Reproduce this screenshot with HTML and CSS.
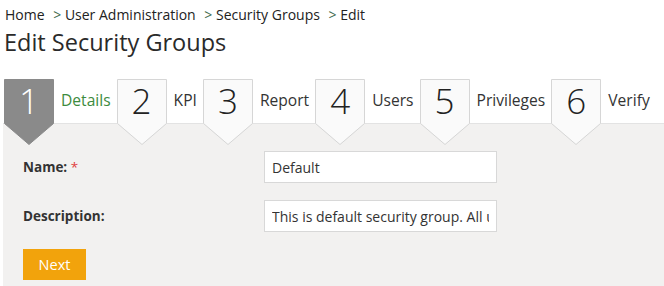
FILE: index.html
```html
<!DOCTYPE html>
<html lang="en">
<head>
    <meta charset="UTF-8">
    <meta name="viewport" content="width=device-width, initial-scale=1.0">
    <title>Edit Security Groups</title>
    <link rel="stylesheet" href="styles.css">
</head>
<body>
    <nav class="breadcrumb" aria-label="Breadcrumb">
        <a href="#">Home</a>
        <span class="sep">&gt;</span> <a href="#">User Administration</a>
        <span class="sep">&gt;</span> <a href="#">Security Groups</a>
        <span class="sep">&gt;</span> <span>Edit</span>
    </nav>
    <h1 class="page-title">Edit Security Groups</h1>

    <div class="wizard">
        <ol class="steps">
            <li class="step active">
                <span class="badge">
                    <svg width="50" height="66" viewBox="0 0 50 66"><polygon points="0.5,0.5 49.5,0.5 49.5,44.5 25,65.5 0.5,44.5"/></svg>
                    <span class="num">1</span>
                </span>
                <span class="label">Details</span>
            </li>
            <li class="step">
                <span class="badge">
                    <svg width="50" height="66" viewBox="0 0 50 66"><polygon points="0.5,0.5 49.5,0.5 49.5,44.5 25,65.5 0.5,44.5"/></svg>
                    <span class="num">2</span>
                </span>
                <span class="label">KPI</span>
            </li>
            <li class="step">
                <span class="badge">
                    <svg width="50" height="66" viewBox="0 0 50 66"><polygon points="0.5,0.5 49.5,0.5 49.5,44.5 25,65.5 0.5,44.5"/></svg>
                    <span class="num">3</span>
                </span>
                <span class="label">Report</span>
            </li>
            <li class="step">
                <span class="badge">
                    <svg width="50" height="66" viewBox="0 0 50 66"><polygon points="0.5,0.5 49.5,0.5 49.5,44.5 25,65.5 0.5,44.5"/></svg>
                    <span class="num">4</span>
                </span>
                <span class="label">Users</span>
            </li>
            <li class="step">
                <span class="badge">
                    <svg width="50" height="66" viewBox="0 0 50 66"><polygon points="0.5,0.5 49.5,0.5 49.5,44.5 25,65.5 0.5,44.5"/></svg>
                    <span class="num">5</span>
                </span>
                <span class="label">Privileges</span>
            </li>
            <li class="step">
                <span class="badge">
                    <svg width="50" height="66" viewBox="0 0 50 66"><polygon points="0.5,0.5 49.5,0.5 49.5,44.5 25,65.5 0.5,44.5"/></svg>
                    <span class="num">6</span>
                </span>
                <span class="label">Verify</span>
            </li>
        </ol>

        <form class="panel">
            <div class="form-row">
                <label for="name">Name: <span class="req">*</span></label>
                <input type="text" id="name" value="Default">
            </div>
            <div class="form-row">
                <label for="desc">Description:</label>
                <input type="text" id="desc" value="This is default security group. All users belong to it">
            </div>
            <button type="button" class="btn-next">Next</button>
        </form>
    </div>
</body>
</html>
```

FILE: styles.css
```css
body {
    margin: 0;
    font-family: "Open Sans", "Noto Sans", sans-serif;
    color: #333;
    background: #fff;
}

.breadcrumb {
    padding: 5px 5px 0;
    font-size: 14px;
    line-height: 20px;
}

.breadcrumb a,
.breadcrumb span {
    color: #222;
    text-decoration: none;
}

.breadcrumb .sep {
    color: #3f6b4f;
    margin-left: 5px;
}

.page-title {
    margin: 0;
    padding-left: 4px;
    font-size: 23.5px;
    font-weight: 400;
    line-height: 34px;
    color: #2a2a2a;
}

.wizard {
    margin-top: 20px;
    margin-left: 3px;
}

.steps {
    position: relative;
    z-index: 1;
    display: flex;
    align-items: flex-start;
    height: 44px;
    margin: 0;
    padding: 0 0 0 1px;
    list-style: none;
    background: #fff;
    border-bottom: 1px solid #e3e3e3;
}

.step {
    display: flex;
    align-items: flex-start;
}

.badge {
    position: relative;
    flex: none;
    width: 50px;
    height: 66px;
}

.badge svg {
    position: absolute;
    top: 0;
    left: 0;
}

.badge polygon {
    fill: #fafafa;
    stroke: #d6d6d6;
}

.badge .num {
    position: relative;
    display: block;
    text-align: center;
    font-size: 35px;
    font-weight: 300;
    line-height: 44px;
    color: #222;
}

.step.active polygon {
    fill: #8a8a8a;
    stroke: #8a8a8a;
}

.step.active .num {
    color: #fff;
}

.label {
    margin: 0 6px 0 7px;
    font-size: 15.6px;
    line-height: 42px;
    color: #333;
}

.step.active .label {
    color: #3d8b3d;
}

.panel {
    background: #f2f1f0;
    padding: 27px 20px 6px;
}

.form-row {
    display: flex;
    align-items: center;
    margin-bottom: 17px;
}

.form-row label {
    width: 241px;
    font-size: 13.5px;
    font-weight: 700;
    color: #333;
}

.req {
    color: #e04040;
    font-weight: 400;
}

.form-row input {
    box-sizing: border-box;
    width: 233px;
    height: 32px;
    padding: 0 7px;
    border: 1px solid #d8d8d8;
    background: #fff;
    font-family: inherit;
    font-size: 14px;
    color: #333;
}

.btn-next {
    display: block;
    width: 63px;
    height: 31px;
    margin-top: 1px;
    border: none;
    background: #f2a30c;
    color: #fff;
    font-family: inherit;
    font-size: 14.5px;
    cursor: pointer;
}
```
